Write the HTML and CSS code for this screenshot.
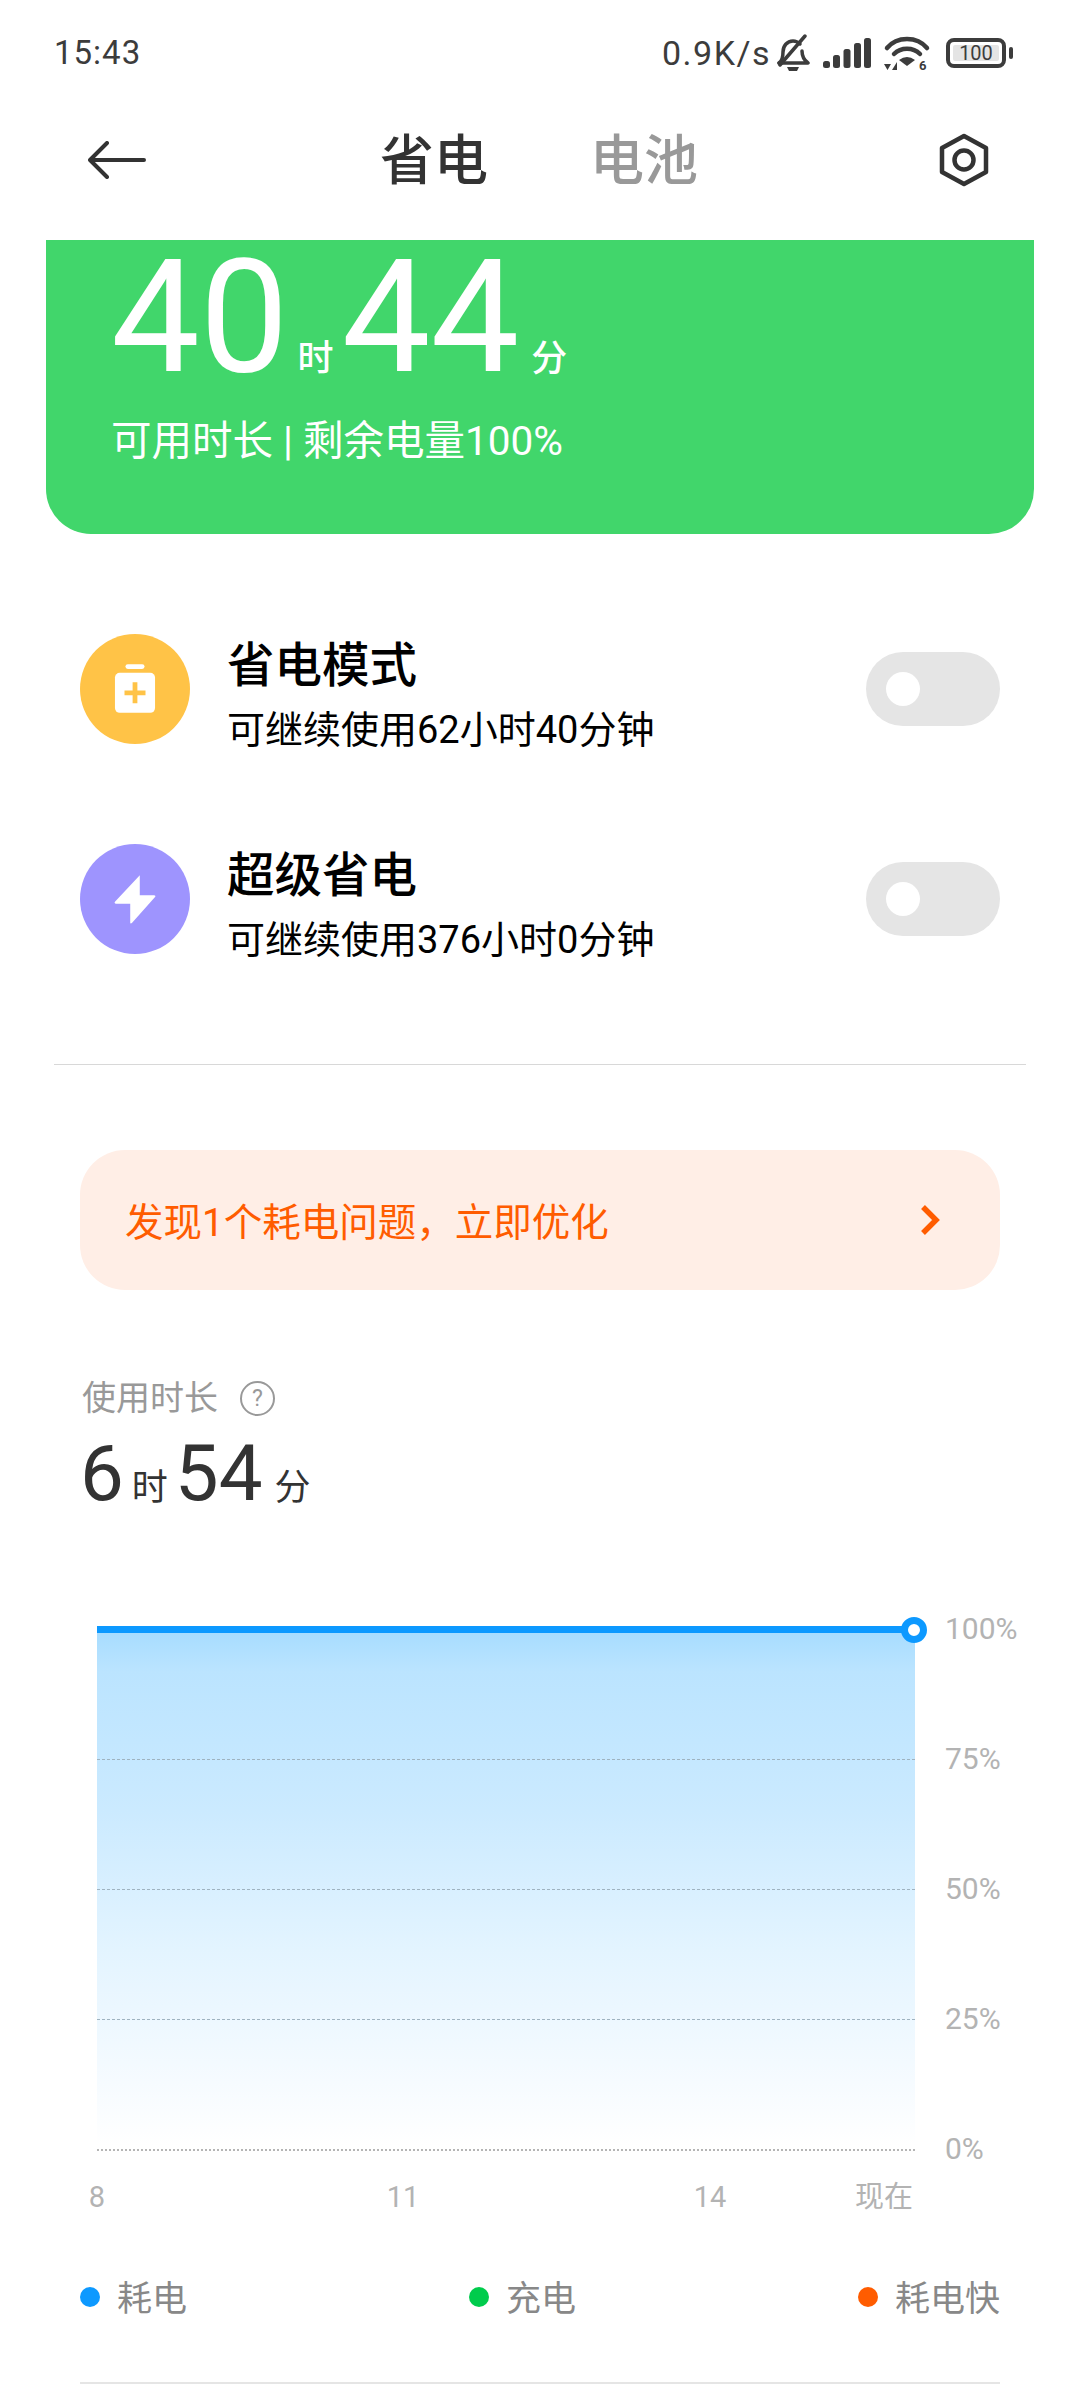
FILE: index.html
```html
<!DOCTYPE html>
<html lang="zh">
<head>
<meta charset="utf-8">
<title>省电</title>
<link rel="stylesheet" href="styles.css">
</head>
<body>
<div class="page">
  <div class="status">
    <span class="time">15:43</span>
    <div class="status-right">
      <span class="speed">0.9K/s</span>
      <svg class="i-bell" viewBox="0 0 34 38"><g fill="none" stroke="#3c3c3c" stroke-width="3.5" stroke-linecap="round" stroke-linejoin="round"><path d="M3 29c3-2 4-6 4-11 0-6 4-11 10-11 3 0 5 1 7 3"/><path d="M26 17c0 5 2 9 6 12H3"/><path d="M4 31 29 2"/></g><path d="M11 33h12l-2 4h-8z" fill="#3c3c3c"/></svg>
      <svg class="i-signal" viewBox="0 0 48 30"><g fill="#3c3c3c"><rect x="0" y="23" width="7" height="7" rx="2.5"/><rect x="10" y="17" width="7" height="13" rx="2.5"/><rect x="20.500" y="11" width="7" height="19" rx="2.5"/><rect x="31" y="5" width="7" height="25" rx="2.5"/><rect x="41" y="0" width="7" height="30" rx="2.5"/></g></svg>
      <svg class="i-wifi" viewBox="0 0 46 34"><g fill="none" stroke="#3c3c3c" stroke-width="4.500" stroke-linecap="round"><path d="M3 12C13 0 33 0 43 12"/><path d="M10 18c7-7 19-7 26 0"/></g><path d="M15 24q8-6 16 0l-8 6z" fill="#3c3c3c"/><path d="M0 28h7l-3.500 6zM8 34h5v-8z" fill="#3c3c3c"/><text class="wifi-six" x="35" y="34">6</text></svg>
      <div class="battery">
        <div class="battery-shell"><span class="battery-level">100</span></div>
        <span class="battery-nub"></span>
      </div>
    </div>
  </div>

  <div class="nav">
    <svg class="i-back" viewBox="0 0 58 38"><path d="M56 19H3M19 2 2 19l17 17" fill="none" stroke="#333" stroke-width="4" stroke-linecap="round" stroke-linejoin="round"/></svg>
    <div class="tabs"><span class="tab tab-on">省电</span><span class="tab">电池</span></div>
    <svg class="i-gear" viewBox="0 0 50 54"><path d="M25 3 47 15v24L25 51 3 39V15z" fill="none" stroke="#333" stroke-width="4.500" stroke-linejoin="round"/><circle cx="25" cy="27" r="9.500" fill="none" stroke="#333" stroke-width="4.500"/></svg>
  </div>

  <section class="hero">
    <div class="hero-time"><b>40</b><i>时</i><b>44</b><i>分</i></div>
    <div class="hero-sub">可用时长 | 剩余电量100%</div>
  </section>

  <section class="modes">
    <div class="mode">
      <div class="mode-icon mode-yellow">
        <svg viewBox="0 0 44 52" class="glyph-batt"><rect x="12" y="0" width="20" height="5" rx="2.500" fill="#fff"/><rect x="1" y="9" width="42" height="42" rx="5" fill="#fff"/><path d="M22 19v22M11 30h22" stroke="#ffc347" stroke-width="5"/></svg>
      </div>
      <div class="mode-text"><div class="mode-title">省电模式</div><div class="mode-sub">可继续使用62小时40分钟</div></div>
      <div class="toggle"><span class="knob"></span></div>
    </div>
    <div class="mode">
      <div class="mode-icon mode-purple">
        <svg viewBox="0 0 44 52" class="glyph-bolt"><path d="M27 1 1 29c-1 1 0 2 1 2h15v20c0 1 1 1 2 0l24-27c1-1 0-2-1-2H27V2c0-1 0-1 0-1z" fill="#fff"/></svg>
      </div>
      <div class="mode-text"><div class="mode-title">超级省电</div><div class="mode-sub">可继续使用376小时0分钟</div></div>
      <div class="toggle"><span class="knob"></span></div>
    </div>
  </section>

  <hr class="rule">

  <div class="banner">
    <span class="banner-text">发现1个耗电问题，立即优化</span>
    <svg class="i-chev" viewBox="0 0 20 32"><path d="M3 3l13 13L3 29" fill="none" stroke="#ff5c00" stroke-width="5.500"/></svg>
  </div>

  <section class="usage">
    <div class="usage-label"><span>使用时长</span>
      <span class="help">?</span></div>
    <div class="usage-time"><b>6</b><i>时</i><b>54</b><i>分</i></div>
  </section>

  <section class="chart">
    <div class="plot">
      <div class="area"></div>
      <div class="grid"><span></span><span></span><span></span><span class="grid-base"></span></div>
      <div class="line"></div>
      <div class="dot"></div>
    </div>
    <div class="y-labels"><span>100%</span><span>75%</span><span>50%</span><span>25%</span><span>0%</span></div>
  </section>

  <div class="x-labels"><span>8</span><span>11</span><span>14</span><span>现在</span></div>

  <div class="legend">
    <div class="legend-item"><span class="ldot ldot-blue"></span>耗电</div>
    <div class="legend-item"><span class="ldot ldot-green"></span>充电</div>
    <div class="legend-item"><span class="ldot ldot-orange"></span>耗电快</div>
  </div>

  <hr class="rule-bottom">
</div>
</body>
</html>
```
FILE: styles.css
```css
* { box-sizing: border-box; }
html, body { margin: 0; padding: 0; background: #fff; }
body { font-family: Roboto, "Noto Sans CJK SC", sans-serif; width: 1080px; height: 2400px; overflow: hidden; }
.page { width: 1080px; height: 2400px; overflow: hidden; }
i { font-style: normal; }

.status { height: 104px; padding: 34px 67px 0 54px; display: flex; justify-content: space-between; align-items: flex-start; color: #3c3c3c; }
.time { font-size: 33px; line-height: 38px; letter-spacing: 1px; }
.status-right { display: flex; align-items: center; height: 38px; }
.speed { font-size: 34px; line-height: 38px; letter-spacing: 1.5px; width: 114px; white-space: nowrap; }
.i-bell { width: 34px; height: 38px; margin-right: 13px; }
.i-signal { width: 48px; height: 30px; margin-right: 13px; }
.i-wifi { width: 46px; height: 34px; margin-right: 16px; overflow: visible; }
.wifi-six { font: 700 13px Roboto, sans-serif; fill: #3c3c3c; }
.battery { display: flex; align-items: center; }
.battery-shell { width: 60px; height: 30px; border: 4px solid #3c3c3c; border-radius: 8px; padding: 3px; display: flex; }
.battery-level { flex: 1; background: #e4e4e4; border-radius: 2px; font-size: 20px; line-height: 16px; text-align: center; color: #3c3c3c; }
.battery-nub { width: 4px; height: 12px; background: #3c3c3c; border-radius: 2px; margin-left: 3px; }

.nav { height: 136px; padding: 0 91px 0 88px; display: flex; align-items: flex-start; position: relative; }
.i-back { width: 58px; height: 38px; margin-top: 37px; }
.tabs { display: flex; gap: 102px; margin: 28px 0 0 234px; }
.tab { font-size: 54px; line-height: 60px; font-weight: 500; color: #999; }
.tab-on { color: #333; }
.i-gear { width: 50px; height: 54px; margin: 29px 0 0 auto; }

.hero { margin: 0 46px; height: 294px; background: #41d66b; border-radius: 0 0 45px 45px; color: #fff; padding: 0 0 0 65px; }
.hero-time { display: flex; align-items: baseline; height: 154px; line-height: 154px; }
.hero-time b { font-size: 158px; font-weight: 400; }
.hero-time i { font-size: 36px; font-weight: 500; margin: 0 8px 0 9px; }
.hero-time i:last-child { margin-left: 12px; }
.hero-sub { margin-top: 22px; font-size: 40.500px; line-height: 50px; }

.modes { padding: 100px 80px 0; display: flex; flex-direction: column; gap: 100px; }
.mode { display: flex; align-items: center; height: 110px; }
.mode-icon { width: 110px; height: 110px; border-radius: 50%; display: flex; align-items: center; justify-content: center; flex: none; }
.mode-yellow { background: #ffc347; }
.mode-purple { background: #9e94fe; }
.glyph-batt { width: 42px; height: 50px; }
.glyph-bolt { width: 42px; height: 50px; }
.mode-text { margin-left: 37px; flex: 1; margin-top: 11px; }
.mode-title { font-size: 47.500px; line-height: 60px; font-weight: 500; color: #000; }
.mode-sub { font-size: 38px; line-height: 48px; color: #000; margin-top: 10px; }
.toggle { width: 134px; height: 74px; background: #e5e5e5; border-radius: 37px; padding: 20px; }
.knob { display: block; width: 34px; height: 34px; background: #fff; border-radius: 50%; }

.rule { margin: 110px 54px 0; height: 1px; border: 0; background: #d8d8d8; }

.banner { margin: 85px 80px 0; height: 140px; background: #ffeee6; border-radius: 45px; padding: 0 60px 0 45px; display: flex; align-items: center; justify-content: space-between; color: #ff5c00; font-size: 38.500px; }
.banner-text { margin-top: -3px; }
.i-chev { width: 20px; height: 32px; }

.usage { margin: 84px 0 0 80px; }
.usage-label { display: flex; align-items: center; gap: 22px; font-size: 34px; line-height: 48px; color: #999; padding-left: 2px; }
.help { width: 35px; height: 35px; border: 2px solid #999; border-radius: 50%; font-size: 23px; line-height: 31px; text-align: center; }
.usage-time { display: flex; align-items: baseline; margin-top: 7px; color: #333; line-height: 90px; }
.usage-time b { font-size: 78px; font-weight: 400; }
.usage-time i { font-size: 36px; margin: 0 7px 0 8px; }
.usage-time i:last-child { margin-left: 12px; }

.chart { margin: 97px 0 0 97px; display: flex; height: 535px; }
.plot { position: relative; width: 818px; height: 535px; }
.area { position: absolute; left: 0; right: 0; top: 0; bottom: 20px; background: linear-gradient(#a6dcff 0, #bbe4ff 8%, #cbeaff 35%, #e3f4ff 62%, #f6fbff 88%, #fff 100%); }
.grid { position: absolute; left: 0; right: 0; top: 129px; display: flex; flex-direction: column; gap: 129px; }
.grid span { display: block; height: 1px; border-top: 1px dashed #9fb3c0; }
.grid .grid-base { border-top: 2px dotted #b5b5b5; }
.line { position: absolute; left: 0; right: 0; top: -4px; height: 7px; background: #0d99ff; }
.dot { position: absolute; right: -12px; top: -13px; width: 26px; height: 26px; border-radius: 50%; background: #fff; border: 7px solid #0d99ff; }
.y-labels { position: relative; margin-left: 30px; display: flex; flex-direction: column; font-size: 30px; line-height: 36px; color: #b3b3b3; }
.y-labels span { height: 36px; margin-top: -19px; margin-bottom: 113px; }
.y-labels span:last-child { margin-bottom: 0; }

.x-labels { margin: 14px 0 0; height: 36px; position: relative; font-size: 29px; line-height: 36px; color: #b3b3b3; }
.x-labels span { position: absolute; transform: translateX(-50%); }
.x-labels span:nth-child(1) { left: 97px; }
.x-labels span:nth-child(2) { left: 403px; }
.x-labels span:nth-child(3) { left: 710px; }
.x-labels span:nth-child(4) { left: 884px; }

.legend { margin: 62px 80px 0; display: flex; justify-content: space-between; font-size: 35px; line-height: 46px; color: #888; }
.legend-item { display: flex; align-items: center; }
.ldot { width: 20px; height: 20px; border-radius: 50%; margin-right: 17px; margin-top: -6px; }
.ldot-blue { background: #0d99ff; }
.ldot-green { background: #00cc4c; }
.ldot-orange { background: #ff5c00; }

.rule-bottom { margin: 59px 80px 0; height: 2px; border: 0; background: #e5e5e5; }
```
